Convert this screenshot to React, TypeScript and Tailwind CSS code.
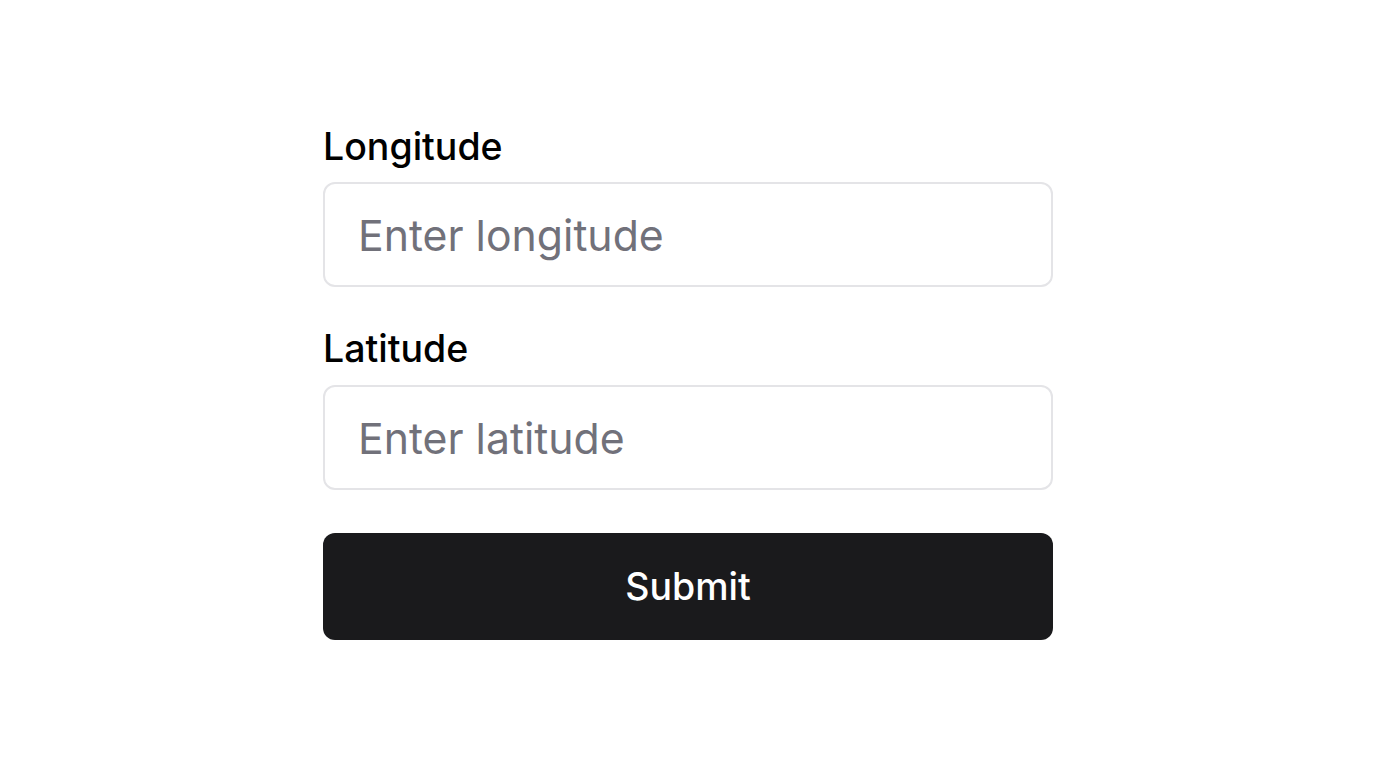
export default function App() {
  return (
    <div className="min-h-screen bg-white" style={{ fontFamily: 'Inter, "Noto Sans", sans-serif' }}>
      <form className="w-[730px] mx-auto pt-[127px] flex flex-col" onSubmit={(e) => e.preventDefault()}>
        <label htmlFor="lng" className="text-[37.5px] leading-[40px] font-medium text-black mb-[15px]">
          Longitude
        </label>
        <input
          id="lng"
          type="text"
          placeholder="Enter longitude"
          className="h-[105px] w-full rounded-[12px] border-2 border-[#e4e4e7] bg-white px-[33px] pt-[2px] text-[42.75px] text-black placeholder:text-[#71717a] outline-none"
        />

        <label htmlFor="lat" className="mt-[42px] text-[37.5px] leading-[40px] font-medium text-black mb-[16px]">
          Latitude
        </label>
        <input
          id="lat"
          type="text"
          placeholder="Enter latitude"
          className="h-[105px] w-full rounded-[12px] border-2 border-[#e4e4e7] bg-white px-[33px] pt-[2px] text-[42.75px] text-black placeholder:text-[#71717a] outline-none"
        />

        <button
          type="submit"
          className="mt-[43px] h-[107px] w-full rounded-[12px] bg-[#1a1a1c] pt-[2px] text-white text-[37.5px] font-medium"
        >
          Submit
        </button>
      </form>
    </div>
  )
}
